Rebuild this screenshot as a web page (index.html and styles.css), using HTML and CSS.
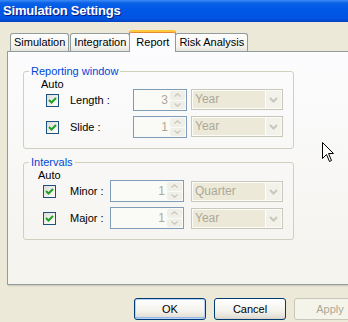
FILE: index.html
```html
<!DOCTYPE html>
<html lang="en">
<head>
    <meta charset="UTF-8">
    <title>Simulation Settings</title>
    <link rel="stylesheet" href="styles.css">
</head>
<body>
    <div class="titlebar">Simulation Settings</div>

    <div class="client">
        <!-- Tabs -->
        <div class="tabs">
            <div class="tab">Simulation</div>
            <div class="tab">Integration</div>
            <div class="tab selected">Report</div>
            <div class="tab">Risk Analysis</div>
        </div>

        <div class="panel">
            <!-- Reporting window -->
            <fieldset class="group group-report">
                <legend>Reporting window</legend>
                <div class="auto">Auto</div>
                <div class="row">
                    <span class="check"><svg width="11" height="11" viewBox="0 0 11 11"><path d="M2 5 L4.5 7.5 L9 3" fill="none" stroke="#21a121" stroke-width="2"/></svg></span>
                    <span class="label">Length :</span>
                    <div class="spin"><span class="value">3</span><span class="spin-btns"><span class="up"><svg width="7" height="4" viewBox="0 0 7 4"><path d="M0.5 3.5 L3.5 0.8 L6.5 3.5" fill="none" stroke="#c9c7ba" stroke-width="1.2"/></svg></span><span class="down"><svg width="7" height="4" viewBox="0 0 7 4"><path d="M0.5 0.5 L3.5 3.2 L6.5 0.5" fill="none" stroke="#c9c7ba" stroke-width="1.2"/></svg></span></span></div>
                    <div class="select"><span class="text">Year</span><span class="drop"><svg width="9" height="6" viewBox="0 0 9 6"><path d="M1 1 L4.5 4.5 L8 1" fill="none" stroke="#c9c7ba" stroke-width="2"/></svg></span></div>
                </div>
                <div class="row">
                    <span class="check"><svg width="11" height="11" viewBox="0 0 11 11"><path d="M2 5 L4.5 7.5 L9 3" fill="none" stroke="#21a121" stroke-width="2"/></svg></span>
                    <span class="label">Slide :</span>
                    <div class="spin"><span class="value">1</span><span class="spin-btns"><span class="up"><svg width="7" height="4" viewBox="0 0 7 4"><path d="M0.5 3.5 L3.5 0.8 L6.5 3.5" fill="none" stroke="#c9c7ba" stroke-width="1.2"/></svg></span><span class="down"><svg width="7" height="4" viewBox="0 0 7 4"><path d="M0.5 0.5 L3.5 3.2 L6.5 0.5" fill="none" stroke="#c9c7ba" stroke-width="1.2"/></svg></span></span></div>
                    <div class="select"><span class="text">Year</span><span class="drop"><svg width="9" height="6" viewBox="0 0 9 6"><path d="M1 1 L4.5 4.5 L8 1" fill="none" stroke="#c9c7ba" stroke-width="2"/></svg></span></div>
                </div>
            </fieldset>

            <!-- Intervals -->
            <fieldset class="group group-intervals">
                <legend>Intervals</legend>
                <div class="auto">Auto</div>
                <div class="row">
                    <span class="check"><svg width="11" height="11" viewBox="0 0 11 11"><path d="M2 5 L4.5 7.5 L9 3" fill="none" stroke="#21a121" stroke-width="2"/></svg></span>
                    <span class="label">Minor :</span>
                    <div class="spin"><span class="value">1</span><span class="spin-btns"><span class="up"><svg width="7" height="4" viewBox="0 0 7 4"><path d="M0.5 3.5 L3.5 0.8 L6.5 3.5" fill="none" stroke="#c9c7ba" stroke-width="1.2"/></svg></span><span class="down"><svg width="7" height="4" viewBox="0 0 7 4"><path d="M0.5 0.5 L3.5 3.2 L6.5 0.5" fill="none" stroke="#c9c7ba" stroke-width="1.2"/></svg></span></span></div>
                    <div class="select"><span class="text">Quarter</span><span class="drop"><svg width="9" height="6" viewBox="0 0 9 6"><path d="M1 1 L4.5 4.5 L8 1" fill="none" stroke="#c9c7ba" stroke-width="2"/></svg></span></div>
                </div>
                <div class="row">
                    <span class="check"><svg width="11" height="11" viewBox="0 0 11 11"><path d="M2 5 L4.5 7.5 L9 3" fill="none" stroke="#21a121" stroke-width="2"/></svg></span>
                    <span class="label">Major :</span>
                    <div class="spin"><span class="value">1</span><span class="spin-btns"><span class="up"><svg width="7" height="4" viewBox="0 0 7 4"><path d="M0.5 3.5 L3.5 0.8 L6.5 3.5" fill="none" stroke="#c9c7ba" stroke-width="1.2"/></svg></span><span class="down"><svg width="7" height="4" viewBox="0 0 7 4"><path d="M0.5 0.5 L3.5 3.2 L6.5 0.5" fill="none" stroke="#c9c7ba" stroke-width="1.2"/></svg></span></span></div>
                    <div class="select"><span class="text">Year</span><span class="drop"><svg width="9" height="6" viewBox="0 0 9 6"><path d="M1 1 L4.5 4.5 L8 1" fill="none" stroke="#c9c7ba" stroke-width="2"/></svg></span></div>
                </div>
            </fieldset>
        </div>

        <div class="buttons">
            <button class="btn default">OK</button>
            <button class="btn">Cancel</button>
            <button class="btn" disabled>Apply</button>
        </div>
    </div>

    <!-- mouse pointer -->
    <svg class="cursor" width="13" height="21" viewBox="0 0 13 21">
        <path d="M0.5 0.5 L0.5 16.5 L4.5 12.5 L7.5 19.5 L9.5 18.5 L6.5 11.5 L11.5 11.5 Z" fill="#fff" stroke="#000" stroke-width="1"/>
    </svg>
</body>
</html>
```

FILE: styles.css
```css
body {
    margin: 0;
    width: 348px;
    height: 322px;
    overflow: hidden;
    background-color: #ece9d8;
    font-family: "Liberation Sans", Arial, sans-serif;
    font-size: 11px;
    color: #000;
    position: relative;
}
.titlebar {
    height: 22px;
    line-height: 21px;
    padding-left: 3px;
    color: #fff;
    font-weight: bold;
    font-size: 13px;
    letter-spacing: -0.2px;
    text-shadow: 1px 1px 0 #0a1883;
    background: linear-gradient(#3d8af7 0, #0a62e6 3px, #0058e6 40%, #0054e0 85%, #0041c4 100%);
}
.client {
    padding: 9px 0 0 7px;
}

/* tabs */
.tabs {
    display: flex;
    align-items: flex-end;
    height: 20px;
    padding-left: 3px;
}
.tab {
    height: 17px;
    line-height: 17px;
    padding: 0 3px;
    margin-right: 1px;
    border: 1px solid #919b9c;
    border-bottom: none;
    border-radius: 3px 3px 0 0;
    background: linear-gradient(#fefefe, #f4f3ee 70%, #e6e5dc);
}
.tab.selected {
    height: 20px;
    line-height: 21px;
    margin: 0 -1px -1px -2px;
    padding: 0 6px;
    background: #fcfcfe;
    border-top: 2px solid #ffc83c;
    box-shadow: inset 0 1px 0 #e68b2c;
    position: relative;
    z-index: 1;
}

/* tab page */
.panel {
    width: 360px;
    height: 234px;
    box-sizing: border-box;
    border: 1px solid #919b9c;
    background: linear-gradient(#fcfcfe, #f4f3ee);
    box-shadow: 1px 1px 0 #d0cebf, 2px 2px 0 #e3e0d0;
    padding: 12px 0 0 15px;
}
.group {
    width: 271px;
    box-sizing: border-box;
    margin: 0;
    padding: 0 0 10px 0;
    border: 1px solid #d0d0bf;
    border-radius: 3px;
}
.group legend {
    margin-left: 5px;
    padding: 0 2px;
    line-height: 15px;
    color: #0046d5;
}
.group-intervals {
    margin-top: 6px;
}
.auto {
    height: 10px;
    line-height: 10px;
}
.group-report .auto {
    padding-left: 17px;
}
.group-intervals .auto {
    padding-left: 14px;
}
.row {
    display: flex;
    align-items: center;
    height: 22px;
}
.row + .row {
    margin-top: 5px;
}
.group-report .row {
    padding-left: 22px;
}
.group-intervals .row {
    padding-left: 19px;
}

/* checkbox */
.check {
    width: 13px;
    height: 13px;
    box-sizing: border-box;
    border: 1px solid #1c5180;
    background: linear-gradient(135deg, #dcdcd7, #fff);
    display: flex;
    align-items: center;
    justify-content: center;
}
.label {
    display: block;
}
.group-report .label {
    margin-left: 11px;
    width: 63px;
}
.group-intervals .label {
    margin-left: 14px;
    width: 40px;
}

/* spinner */
.spin {
    height: 22px;
    box-sizing: border-box;
    border: 1px solid #7f9db9;
    background: #fafaf7;
    display: flex;
    align-items: stretch;
}
.group-report .spin {
    width: 54px;
}
.group-intervals .spin {
    width: 74px;
}
.spin .value {
    flex: 1;
    text-align: right;
    padding-right: 2px;
    line-height: 20px;
    font-size: 12px;
    color: #aca899;
}
.spin-btns {
    width: 15px;
    padding: 1px 1px 1px 0;
    display: flex;
    flex-direction: column;
    gap: 1px;
}
.spin-btns span {
    flex: 1;
    background: #efeee7;
    border-radius: 2px;
    display: flex;
    align-items: center;
    justify-content: center;
}

/* combobox */
.select {
    width: 92px;
    height: 21px;
    box-sizing: border-box;
    border: 1px solid #c9c7ba;
    background: #ece9d8;
    box-shadow: inset 0 0 0 1px #fbfbf8;
    margin-left: 4px;
    align-self: flex-start;
    display: flex;
}
.group-intervals .select {
    margin-left: 7px;
    margin-top: 1px;
}
.select .text {
    flex: 1;
    padding-left: 3px;
    line-height: 19px;
    font-size: 12px;
    color: #aca899;
}
.select .drop {
    width: 15px;
    margin: 1px;
    background: #f2f1ea;
    border-left: 1px solid #fff;
    display: flex;
    align-items: center;
    justify-content: center;
}

/* dialog buttons */
.buttons {
    display: flex;
    gap: 8px;
    margin-top: 13px;
    padding-left: 127px;
}
.btn {
    width: 72px;
    height: 22px;
    flex: none;
    padding: 0;
    font-family: "Liberation Sans", Arial, sans-serif;
    font-size: 11px;
    color: #000;
    border: 1px solid #003c74;
    border-radius: 3px;
    background: linear-gradient(#fff, #f3f2ec 60%, #e3e0d6 90%, #d6d0c5);
}
.btn.default {
    box-shadow: inset 0 0 0 1px #b9d1f6, inset 0 -1px 0 1px #98b8ea;
}
.btn:disabled {
    border-color: #c9c7ba;
    background: #f5f4ea;
    color: #aca899;
}

.cursor {
    position: absolute;
    left: 322px;
    top: 142px;
}
```
